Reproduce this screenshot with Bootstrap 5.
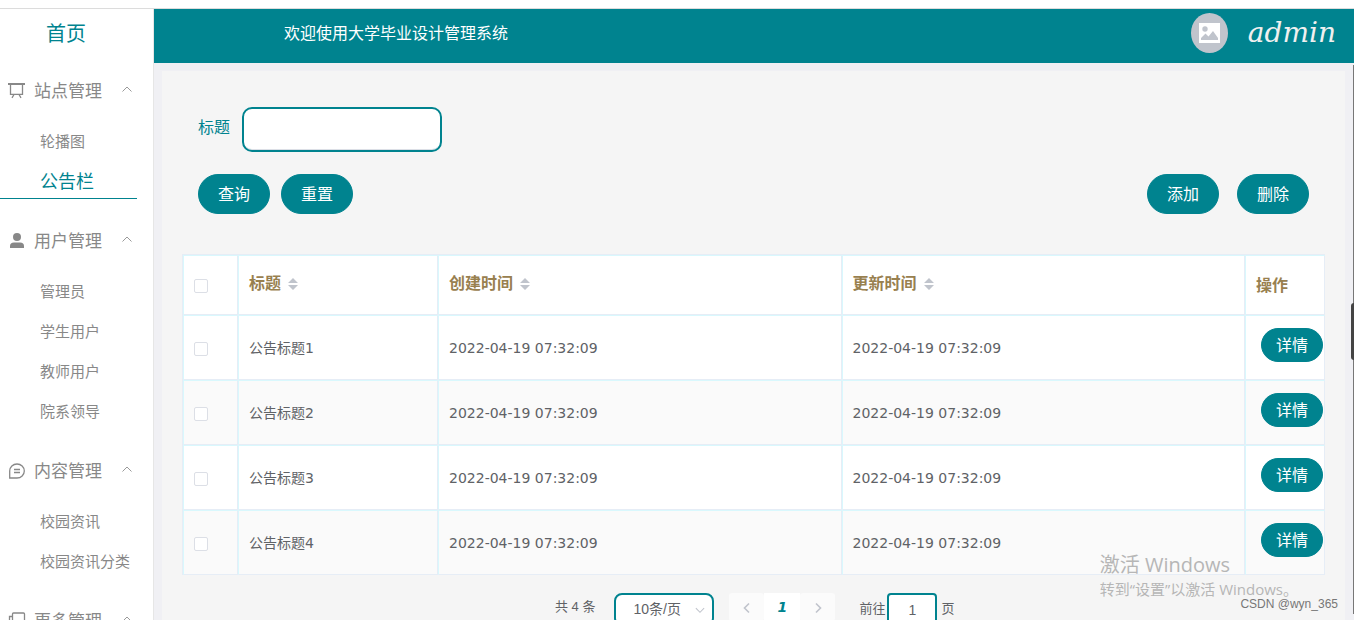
<!DOCTYPE html>
<html lang="zh-CN">
<head>
<meta charset="utf-8">
<meta name="viewport" content="width=device-width, initial-scale=1">
<title>大学毕业设计管理系统</title>
<link href="https://cdn.jsdelivr.net/npm/bootstrap@5.3.0/dist/css/bootstrap.min.css" rel="stylesheet">
<style>
:root { --teal: #00838f; --line: #e6edf6; --cyan: #d9f8fd; }
body { font-family: "Liberation Sans", "Noto Sans CJK SC", sans-serif; font-size: 14px; color: #606266; background: #fff; }
a { text-decoration: none; }
.app-shell { height: 100vh; padding-top: 8px; }
.app-body { border-top: 1px solid #dcdcdc; min-height: 0; }

/* sidebar */
.side-menu { width: 154px; border-right: 1px solid #e6e6e6; }
.side-home { height: 52px; padding-right: 21px; font-size: 20px; line-height: 50px; color: var(--teal); }
.side-group { width: 137px; padding-bottom: 10px; color: #888; }
.side-title { height: 60px; padding: 0 4px 0 8px; font-size: 17px; line-height: 24px; color: #888; }
.side-title span { padding-top: 2px; }
.side-title .arrow { margin-bottom: 4px; }
.side-item { display: block; height: 40px; line-height: 42px; padding-left: 40px; font-size: 15px; color: #888; }
.side-item.active { height: 38px; line-height: 42px; margin-bottom: 2px; font-size: 18px; color: var(--teal); border-bottom: 1px solid var(--teal); }

/* header */
.top-bar { height: 54px; padding: 0 18px 6px 130px; background: var(--teal); color: #fff; }
.top-title { font-size: 16px; line-height: 24px; padding-top: 2px; }
.avatar-pic { width: 37px; height: 40px; border-radius: 50%; background: #c0c4cc; }
.user-name { margin-left: 20px; font: italic 28px/40px "DejaVu Serif", serif; color: #f0f0f0; }

/* content */
.main-area { background: #f0f0f4; }
.content-panel { margin: 8px 9px 0 8px; padding: 36px 20px 0; background: #f5f5f5; }
.search-label { font-size: 16px; color: var(--teal); padding-bottom: 4px; margin-right: 12px; }
.search-input { width: 200px; height: 45px; border: 2px solid var(--teal); border-radius: 10px; box-shadow: inset 0 -2px 0 -1px #dcdfe6; }
.btn-pill { --bs-btn-color: #fff; --bs-btn-bg: var(--teal); --bs-btn-border-color: var(--teal); --bs-btn-hover-color: #fff; --bs-btn-hover-bg: #006f79; --bs-btn-hover-border-color: #006f79;
  --bs-btn-padding-x: 0; --bs-btn-padding-y: 0; --bs-btn-font-size: 16px; --bs-btn-border-radius: 20px; width: 72px; height: 40px; padding-top: 2px; }
.btn-detail { --bs-btn-border-radius: 17px; width: 62px; height: 34px; }
.tool-row { margin: 22px 16px 0; }
.tool-left { gap: 11px; }
.tool-right { gap: 18px; }

/* table */
.data-table { table-layout: fixed; border-collapse: separate; border-spacing: 0; margin: 40px 0 0; border: 0 solid var(--line); border-width: 1px 0 0 1px; width: 100%; }
.data-table th, .data-table td { padding: 0 10px; vertical-align: middle; border: 1px solid var(--line); border-top-color: var(--cyan); border-left-color: var(--cyan); background: #fff; }
.data-table th { height: 60px; padding-top: 2px; font-size: 16px; font-weight: 700; color: #98804f; }
.data-table td { height: 65px; padding-top: 2px; color: #606266; }
.data-table tbody tr:nth-child(even) td { background: #fafafa; }
.data-table .time-cell { font-family: "DejaVu Sans", sans-serif; }
.data-table .name-cell { font-family: "DejaVu Sans", "Noto Sans CJK SC", sans-serif; }
.data-table .op-cell { padding: 0 0 6px 15px; }
.data-table .form-check-input { display: block; width: 14px; height: 14px; margin: 0; border: 1px solid #dcdfe6; border-radius: 2px; }
.sort-head { padding-bottom: 4px; gap: 7px; }

/* pagination */
.pager-row { height: 60px; margin-top: 18px; padding: 0 0 0 373px; }
.pager-row .soft { font-size: 13px; line-height: 28px; }
.pager-row .jump-word { line-height: 32px; }
.size-select { width: 100px; height: 33px; margin: 0 15px 0 19px; padding: 0 24px 2px 17px; font-size: 14px; line-height: 26px; color: #606266; border: 2px solid var(--teal); border-radius: 8px; background-position: right 6px center; background-size: 12px;
  --bs-form-select-bg-img: url("data:image/svg+xml,%3csvg xmlns='http://www.w3.org/2000/svg' viewBox='0 0 16 16'%3e%3cpath fill='none' stroke='%23c0c4cc' stroke-width='1.4' d='M2.5 5.5 8 11l5.500-5.500'/%3e%3c/svg%3e"); }
.pager-btn { width: 35px; height: 28px; border: 0; border-radius: 3px; background: #fbfbfb; color: #c0c4cc; padding: 0; }
.pager-now { width: 36px; border-radius: 0; background: #fff; font: italic bold 14px/28px "DejaVu Sans", sans-serif; color: var(--teal); }
.jump-input { width: 50px; height: 33px; margin: 0 4px 0 2px; padding: 0; text-align: center; font-size: 14px; color: #606266; border: 2px solid var(--teal); border-radius: 4px; }

/* overlays */
.activate-note { position: absolute; right: 56px; bottom: 22px; font-family: "Open Sans", "Noto Sans CJK SC", sans-serif; color: #b6b6b6; pointer-events: none; }
.activate-note .big { font-size: 20px; line-height: 30px; }
.activate-note .sub { font-size: 15px; line-height: 18px; }
.csdn-note { position: absolute; right: 16px; bottom: 9px; font-size: 12px; line-height: 13px; color: #777; pointer-events: none; }
.scroll-line { position: absolute; right: 0; top: 65px; bottom: 6px; width: 1px; background: #777; }
.scroll-grip { position: absolute; right: 0; top: 303px; width: 3px; height: 57px; border-radius: 3px 0 0 3px; background: #444; }
</style>
</head>
<body>
<div class="app-shell d-flex flex-column position-relative overflow-hidden">
  <div class="app-body d-flex flex-grow-1">
    <nav class="side-menu flex-shrink-0 overflow-hidden">
      <a href="#" class="side-home d-block text-center">首页</a>
      <div class="side-group">
        <div class="side-title d-flex align-items-center">
          <svg width="18" height="18" viewBox="0 0 18 18" fill="none" stroke="#888" stroke-width="1.3"><path stroke-width="2" d="M0 2h17"/><path d="M2.500 2v10.300h12V2M6 12.500l-2 3.300M11 12.500l2 3.300"/></svg>
          <span class="ms-2">站点管理</span>
          <svg class="arrow ms-auto" width="12" height="12" viewBox="0 0 12 12" fill="none" stroke="#999"><path d="M1.500 8.500 6 4l4.500 4.500"/></svg>
        </div>
        <a href="#" class="side-item">轮播图</a>
        <a href="#" class="side-item active">公告栏</a>
      </div>
      <div class="side-group">
        <div class="side-title d-flex align-items-center">
          <svg width="18" height="18" viewBox="0 0 18 18" fill="#888"><circle cx="9" cy="5" r="4"/><path d="M2 16v-2q0-3.500 4-3.500h6q4 0 4 3.500v2z"/></svg>
          <span class="ms-2">用户管理</span>
          <svg class="arrow ms-auto" width="12" height="12" viewBox="0 0 12 12" fill="none" stroke="#999"><path d="M1.500 8.500 6 4l4.500 4.500"/></svg>
        </div>
        <a href="#" class="side-item">管理员</a>
        <a href="#" class="side-item">学生用户</a>
        <a href="#" class="side-item">教师用户</a>
        <a href="#" class="side-item">院系领导</a>
      </div>
      <div class="side-group">
        <div class="side-title d-flex align-items-center">
          <svg width="18" height="18" viewBox="0 0 18 18" fill="none" stroke="#888" stroke-width="1.3"><path d="M1.700 16V9a7.300 7 0 1 1 7.300 7zM6 7.500h6M6 10.500h6"/></svg>
          <span class="ms-2">内容管理</span>
          <svg class="arrow ms-auto" width="12" height="12" viewBox="0 0 12 12" fill="none" stroke="#999"><path d="M1.500 8.500 6 4l4.500 4.500"/></svg>
        </div>
        <a href="#" class="side-item">校园资讯</a>
        <a href="#" class="side-item">校园资讯分类</a>
      </div>
      <div class="side-group">
        <div class="side-title d-flex align-items-center">
          <svg width="18" height="18" viewBox="0 0 18 18" fill="none" stroke="#888" stroke-width="1.3"><rect x="4.500" y="1" width="12" height="12" rx="1"/><path d="M4.500 4.500h-3V16h12v-3"/></svg>
          <span class="ms-2">更多管理</span>
          <svg class="arrow ms-auto" width="12" height="12" viewBox="0 0 12 12" fill="none" stroke="#999"><path d="M1.500 8.500 6 4l4.500 4.500"/></svg>
        </div>
      </div>
    </nav>

    <div class="main-area flex-grow-1 d-flex flex-column overflow-hidden">
      <header class="top-bar d-flex align-items-center flex-shrink-0">
        <span class="top-title">欢迎使用大学毕业设计管理系统</span>
        <span class="avatar-pic ms-auto d-flex align-items-center justify-content-center">
          <svg width="21" height="20" viewBox="0 0 21 20"><path fill="#fff" d="M0 0h21v20H0z"/><circle cx="6" cy="6" r="2.700" fill="#c0c4cc"/><path fill="#c0c4cc" d="M2 17v-2l4.500-4.500 3 3L14 8l5 7v2z"/></svg>
        </span>
        <span class="user-name">admin</span>
      </header>

      <main class="content-panel flex-grow-1">
        <form>
          <div class="d-flex align-items-center ms-3">
            <label for="title" class="search-label">标题</label>
            <input id="title" type="text" class="form-control search-input flex-shrink-0">
          </div>
          <div class="tool-row d-flex justify-content-between">
            <div class="tool-left d-flex">
              <button type="button" class="btn btn-pill">查询</button>
              <button type="reset" class="btn btn-pill">重置</button>
            </div>
            <div class="tool-right d-flex">
              <button type="button" class="btn btn-pill">添加</button>
              <button type="button" class="btn btn-pill">删除</button>
            </div>
          </div>
        </form>

        <table class="data-table">
          <colgroup><col style="width:55px"><col style="width:200px"><col><col><col style="width:80px"></colgroup>
          <thead>
            <tr>
              <th><input class="form-check-input" type="checkbox" aria-label="全选"></th>
              <th><div class="sort-head d-flex align-items-center">标题 <svg width="10" height="12" viewBox="0 0 10 12" fill="#c0c4cc"><path d="M5 0l5 5H0zM0 7h10l-5 5z"/></svg></div></th>
              <th><div class="sort-head d-flex align-items-center">创建时间 <svg width="10" height="12" viewBox="0 0 10 12" fill="#c0c4cc"><path d="M5 0l5 5H0zM0 7h10l-5 5z"/></svg></div></th>
              <th><div class="sort-head d-flex align-items-center">更新时间 <svg width="10" height="12" viewBox="0 0 10 12" fill="#c0c4cc"><path d="M5 0l5 5H0zM0 7h10l-5 5z"/></svg></div></th>
              <th>操作</th>
            </tr>
          </thead>
          <tbody>
            <tr><td><input class="form-check-input" type="checkbox" aria-label="选择1"></td><td class="name-cell">公告标题1</td><td class="time-cell">2022-04-19 07:32:09</td><td class="time-cell">2022-04-19 07:32:09</td><td class="op-cell"><button type="button" class="btn btn-pill btn-detail">详情</button></td></tr>
            <tr><td><input class="form-check-input" type="checkbox" aria-label="选择2"></td><td class="name-cell">公告标题2</td><td class="time-cell">2022-04-19 07:32:09</td><td class="time-cell">2022-04-19 07:32:09</td><td class="op-cell"><button type="button" class="btn btn-pill btn-detail">详情</button></td></tr>
            <tr><td><input class="form-check-input" type="checkbox" aria-label="选择3"></td><td class="name-cell">公告标题3</td><td class="time-cell">2022-04-19 07:32:09</td><td class="time-cell">2022-04-19 07:32:09</td><td class="op-cell"><button type="button" class="btn btn-pill btn-detail">详情</button></td></tr>
            <tr><td><input class="form-check-input" type="checkbox" aria-label="选择4"></td><td class="name-cell">公告标题4</td><td class="time-cell">2022-04-19 07:32:09</td><td class="time-cell">2022-04-19 07:32:09</td><td class="op-cell"><button type="button" class="btn btn-pill btn-detail">详情</button></td></tr>
          </tbody>
        </table>

        <div class="pager-row d-flex align-items-start">
          <span class="soft">共 4 条</span>
          <select class="form-select size-select" aria-label="每页条数"><option>10条/页</option></select>
          <button type="button" class="pager-btn" aria-label="上一页"><svg width="12" height="12" viewBox="0 0 12 12" fill="none" stroke="#c0c4cc" stroke-width="1.600"><path d="M8 1.500 3.500 6 8 10.500"/></svg></button>
          <button type="button" class="pager-btn pager-now">1</button>
          <button type="button" class="pager-btn" aria-label="下一页"><svg width="12" height="12" viewBox="0 0 12 12" fill="none" stroke="#c0c4cc" stroke-width="1.600"><path d="M4 1.500 8.500 6 4 10.500"/></svg></button>
          <label for="jump" class="soft jump-word ms-4">前往</label>
          <input id="jump" type="text" class="form-control jump-input" value="1">
          <span class="soft jump-word">页</span>
        </div>
      </main>
    </div>
  </div>
  <div class="activate-note">
    <div class="big">激活 Windows</div>
    <div class="sub">转到“设置”以激活 Windows。</div>
  </div>
  <div class="csdn-note">CSDN @wyn_365</div>
  <div class="scroll-line"></div>
  <div class="scroll-grip"></div>
</div>
<script src="https://cdn.jsdelivr.net/npm/bootstrap@5.3.0/dist/js/bootstrap.bundle.min.js"></script>
</body>
</html>
